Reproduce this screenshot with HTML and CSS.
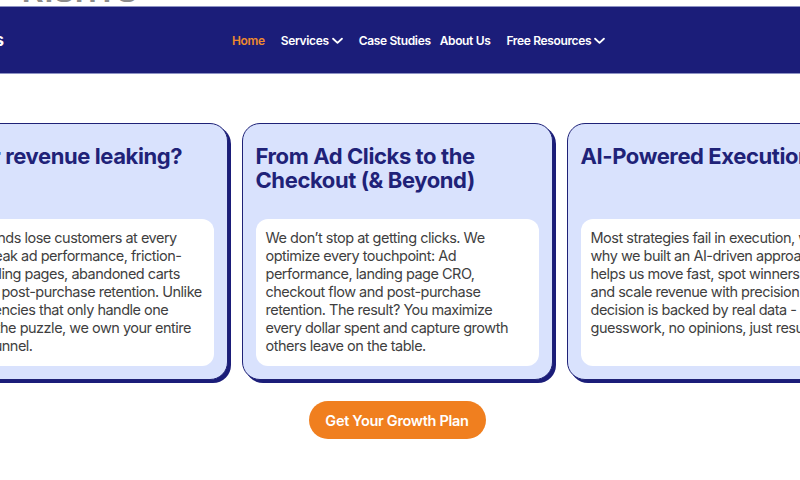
FILE: index.html
```html
<!DOCTYPE html>
<html lang="en">
<head>
<meta charset="utf-8">
<title>Growth</title>
<link rel="stylesheet" href="styles.css">
</head>
<body>
<div class="topstrip"><span class="toplogo">RISHTS</span></div>
<header class="navbar">
  <div class="brand"><span class="brand-text">Ads</span></div>
  <nav class="links">
    <a class="link active">Home</a>
    <a class="link">Services <svg class="chev" viewBox="0 0 12 8" width="11" height="8"><polyline points="1.2,1.5 6,6 10.8,1.5" fill="none" stroke="#fff" stroke-width="2" stroke-linecap="round" stroke-linejoin="round"/></svg></a>
    <a class="link tight">Case Studies</a>
    <a class="link">About Us</a>
    <a class="link">Free Resources <svg class="chev" viewBox="0 0 12 8" width="11" height="8"><polyline points="1.2,1.5 6,6 10.8,1.5" fill="none" stroke="#fff" stroke-width="2" stroke-linecap="round" stroke-linejoin="round"/></svg></a>
  </nav>
</header>
<main class="main">
  <div class="cards">
    <article class="card">
      <h2 class="card-title">Is your revenue leaking?</h2>
      <div class="card-body">Most brands lose customers at every stage: weak ad performance, friction-filled landing pages, abandoned carts and poor post-purchase retention. Unlike other agencies that only handle one piece of the puzzle, we own your entire growth funnel.</div>
    </article>
    <article class="card">
      <h2 class="card-title">From Ad Clicks to the Checkout (&amp; Beyond)</h2>
      <div class="card-body">We don’t stop at getting clicks. We optimize every touchpoint: Ad performance, landing page CRO, checkout flow and post-purchase retention. The result? You maximize every dollar spent and capture growth others leave on the table.</div>
    </article>
    <article class="card">
      <h2 class="card-title">AI-Powered Execution</h2>
      <div class="card-body">Most strategies fail in execution, which is why we built an AI-driven approach that helps us move fast, spot winners early and scale revenue with precision. Every decision is backed by real data - no guesswork, no opinions, just results.</div>
    </article>
  </div>
  <a class="cta">Get Your Growth Plan</a>
</main>
</body>
</html>
```
FILE: styles.css
```css
* { box-sizing: border-box; }
html, body { margin: 0; padding: 0; }
body {
  background: #ffffff;
  font-family: Inter, "Noto Sans", sans-serif;
  width: 800px;
  height: 480px;
  overflow: hidden;
}
.topstrip {
  height: 6px;
  overflow: hidden;
  padding-left: 22px;
  background: #fff;
}
.toplogo {
  display: block;
  font-family: "Liberation Sans", sans-serif;
  font-weight: 700;
  font-size: 30px;
  line-height: 30px;
  margin-top: -23px;
  color: #8c8c8c;
  letter-spacing: 1px;
}
.navbar {
  height: 68px;
  background: #1b1d79;
  border-top: 1px solid #8d92c4;
  border-bottom: 1px solid #8d92c4;
  display: flex;
  align-items: center;
}
.brand {
  width: 4px;
  display: flex;
  justify-content: flex-end;
  overflow: visible;
  white-space: nowrap;
}
.brand-text {
  color: #fff;
  font-weight: 700;
  font-size: 17px;
}
.links {
  margin-left: 228px;
  display: flex;
  align-items: center;
  gap: 16px;
}
.link {
  color: #ffffff;
  font-weight: 600;
  font-size: 12px;
  letter-spacing: -0.35px;
  display: flex;
  align-items: center;
  gap: 3px;
  white-space: nowrap;
}
.link.active { color: #ee8a2e; }
.link.tight { margin-right: -7px; }
.chev { display: block; margin-top: 1px; }
.main {
  width: 794px;
  padding-top: 49px;
  display: flex;
  flex-direction: column;
  align-items: center;
}
.cards {
  width: 794px;
  display: flex;
  justify-content: center;
  gap: 14px;
}
.card {
  flex: 0 0 311px;
  height: 257px;
  background: #d9e2fd;
  border: 1px solid #1f2277;
  border-radius: 18px;
  box-shadow: 3px 3px 0 #1b1d79;
  padding: 20px 13px 13px 13px;
  display: flex;
  flex-direction: column;
}
.card-title {
  margin: 0;
  height: 75px;
  font-size: 22px;
  line-height: 24px;
  font-weight: 700;
  letter-spacing: -0.4px;
  color: #1f2278;
}
.card-body {
  flex: 1;
  background: #ffffff;
  border-radius: 12px;
  padding: 10px 11px 11px 10px;
  font-size: 14.5px;
  line-height: 18px;
  color: #3f3f3f;
  letter-spacing: -0.5px;
}
.cta {
  margin-top: 21px;
  width: 177px;
  height: 38px;
  border-radius: 19px;
  background: #f07f1f;
  color: #fff;
  font-weight: 600;
  font-size: 14.5px;
  letter-spacing: -0.3px;
  display: flex;
  align-items: center;
  justify-content: center;
}
```
